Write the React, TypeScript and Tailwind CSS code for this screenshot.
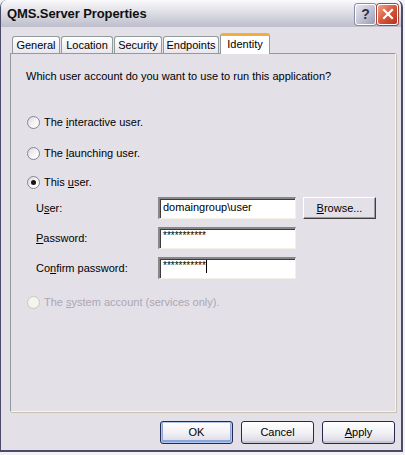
const tabs = [
  { label: "General", w: "w-[48px]" },
  { label: "Location", w: "w-[52px]" },
  { label: "Security", w: "w-[48px]" },
  { label: "Endpoints", w: "w-[56px]" },
];

function Radio({ checked = false, disabled = false }: { checked?: boolean; disabled?: boolean }) {
  return (
    <span
      className={`w-[13px] h-[13px] shrink-0 rounded-full border flex items-center justify-center ${
        disabled
          ? "border-[#cac8bb] bg-[#f4f3ee]"
          : "border-[#86868f] bg-gradient-to-br from-[#d8d6dc] via-[#f4f4f6] to-white"
      }`}
    >
      {checked && <span className="w-[5px] h-[5px] rounded-full bg-[#141414]" />}
    </span>
  );
}

function XPButton({ children, isDefault = false }: { children: React.ReactNode; isDefault?: boolean }) {
  return (
    <button
      className={`w-[73px] h-[23px] rounded-[3px] border border-[#28284e] bg-gradient-to-b from-white via-[#f2f1f6] to-[#d9d7e2] text-[11px] text-black flex items-center justify-center ${
        isDefault ? "shadow-[inset_0_0_0_1px_#b4c8ee,inset_0_-1px_0_2px_#8aa6de]" : "shadow-[inset_0_-2px_0_#c8c6d4]"
      }`}
    >
      {children}
    </button>
  );
}

function Field({ children }: { children?: React.ReactNode }) {
  return (
    <div className="w-[138px] h-[22px] bg-white border-t-2 border-l-2 border-b border-r border-t-[#878787] border-l-[#878787] border-b-[#f3f0e6] border-r-[#f3f0e6] shadow-[inset_1px_1px_0_#3c3c3c] pl-[3px] flex items-start overflow-hidden">
      {children}
    </div>
  );
}

export default function App() {
  return (
    <div className="w-[405px] h-[455px] overflow-hidden bg-[#f2f2f6] font-['Liberation_Sans',Arial,sans-serif] text-[11px] text-black">
      <div className="w-[403px] h-[452px] flex flex-col border-l border-r-2 border-b-2 border-[#4c4c6a] rounded-t-[7px] bg-[#e4e0e8] overflow-hidden">
        {/* Title bar */}
        <div className="h-[27px] shrink-0 flex items-center pl-[6px] pr-[3px] bg-gradient-to-b from-[#fafafc] via-[#dcdce4] to-[#bdbdcc]">
          <span className="font-bold text-[13px] text-[#101010] tracking-[-0.1px]">QMS.Server Properties</span>
          <div className="ml-auto flex gap-[1px] mt-[1px]">
            <div className="w-[21px] h-[21px] rounded-[3px] border border-white bg-gradient-to-br from-[#e6e6f0] via-[#c4c4d6] to-[#9a9ab4] shadow-[0_0_0_1px_#8a8aa4] flex items-center justify-center text-[14px] font-bold text-[#30304a]">
              ?
            </div>
            <div className="w-[21px] h-[21px] rounded-[3px] border border-white bg-gradient-to-br from-[#f0a08c] via-[#d8553a] to-[#b8301e] shadow-[0_0_0_1px_#a04838] flex items-center justify-center">
              <svg width="12" height="12" viewBox="0 0 12 12">
                <path d="M2 2 L10 10 M10 2 L2 10" stroke="white" strokeWidth="2.2" strokeLinecap="square" />
              </svg>
            </div>
          </div>
        </div>

        {/* Body */}
        <div className="flex-1 pl-[9px] pr-[6px] pt-[6px]">
          {/* Tabs */}
          <div className="h-[20px] flex items-end pl-[2px] gap-[1px]">
            {tabs.map((t) => (
              <div
                key={t.label}
                className={`${t.w} h-[17px] rounded-t-[3px] border border-b-0 border-[#919b9c] bg-gradient-to-b from-white to-[#e9e7ee] flex items-center justify-center`}
              >
                {t.label}
              </div>
            ))}
            <div className="relative z-10 w-[50px] h-[21px] -mb-[1px] rounded-t-[3px] border border-b-0 border-[#919b9c] border-t-[3px] border-t-[#f2ae3c] bg-white flex items-center justify-center pb-[2px]">
              Identity
            </div>
          </div>

          {/* Panel */}
          <div className="w-[386px] h-[359px] border border-[#919b9c] border-r-[#f4f4f4] border-b-[#f4f4f4] shadow-[1px_1px_0_#c8c2ae] pl-[15px]">
            <div className="mt-[15px] h-[14px] flex items-center">
              Which user account do you want to use to run this application?
            </div>

            <div className="mt-[32px] h-[14px] flex items-center gap-[4px] pl-[1px]">
              <Radio />
              <span>
                The <span className="underline underline-offset-1">i</span>nteractive user.
              </span>
            </div>
            <div className="mt-[17px] h-[14px] flex items-center gap-[4px] pl-[1px]">
              <Radio />
              <span>
                The <span className="underline underline-offset-1">l</span>aunching user.
              </span>
            </div>
            <div className="mt-[15px] h-[14px] flex items-center gap-[4px] pl-[1px]">
              <Radio checked />
              <span>
                This <span className="underline underline-offset-1">u</span>ser.
              </span>
            </div>

            <div className="mt-[8px] h-[22px] flex items-center pl-[10px]">
              <span className="w-[122px]">
                U<span className="underline underline-offset-1">s</span>er:
              </span>
              <Field>
                <span className="leading-[17px]">domaingroup\user</span>
              </Field>
              <button className="ml-[7px] w-[73px] h-[22px] bg-[#e4e0e8] border border-t-white border-l-white border-r-[#404040] border-b-[#404040] shadow-[inset_-1px_-1px_0_#9c9aa4] flex items-center justify-center">
                <span>
                  <span className="underline underline-offset-1">B</span>rowse...
                </span>
              </button>
            </div>
            <div className="mt-[8px] h-[22px] flex items-center pl-[10px]">
              <span className="w-[122px]">
                <span className="underline underline-offset-1">P</span>assword:
              </span>
              <Field>
                <span className="text-[10px] leading-[12px] pt-[1px]">***********</span>
              </Field>
            </div>
            <div className="mt-[8px] h-[22px] flex items-center pl-[10px]">
              <span className="w-[122px]">
                Co<span className="underline underline-offset-1">n</span>firm password:
              </span>
              <Field>
                <span className="text-[10px] leading-[12px] pt-[1px]">***********</span>
                <span className="w-[1px] h-[13px] bg-black mt-[1px]" />
              </Field>
            </div>

            <div className="mt-[16px] h-[14px] flex items-center gap-[4px] pl-[1px] text-[#aca6b2]">
              <Radio disabled />
              <span>
                The <span className="underline underline-offset-1">s</span>ystem account (services only).
              </span>
            </div>
          </div>

          {/* Buttons */}
          <div className="mt-[9px] flex justify-end gap-[8px] pr-[0px]">
            <XPButton isDefault>OK</XPButton>
            <XPButton>Cancel</XPButton>
            <XPButton>
              <span>
                <span className="underline underline-offset-1">A</span>pply
              </span>
            </XPButton>
          </div>
        </div>
      </div>
    </div>
  );
}
